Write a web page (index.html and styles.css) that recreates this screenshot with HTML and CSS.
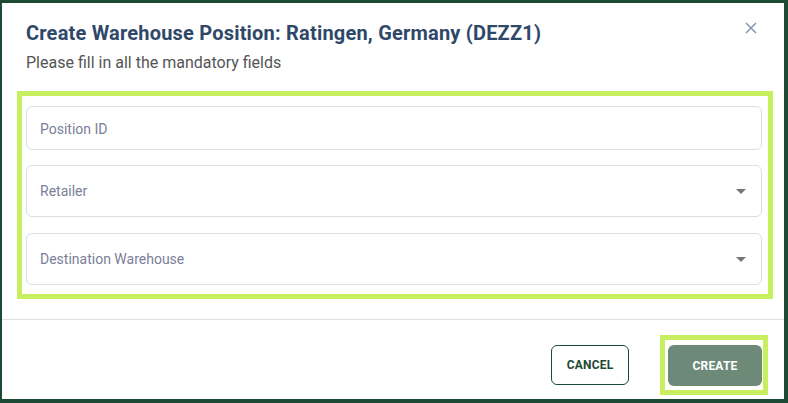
FILE: index.html
```html
<!DOCTYPE html>
<html lang="en">
<head>
<meta charset="utf-8">
<title>Create Warehouse Position</title>
<link rel="stylesheet" href="styles.css">
</head>
<body>
<div class="dialog">
  <div class="header">
    <div class="titles">
      <h1 class="title">Create Warehouse Position: Ratingen, Germany (DEZZ1)</h1>
      <p class="subtitle">Please fill in all the mandatory fields</p>
    </div>
    <button class="close" aria-label="Close">
      <svg width="12" height="12" viewBox="0 0 12 12"><path d="M1 1L11 11M11 1L1 11" stroke="#8794b0" stroke-width="1.5" fill="none"/></svg>
    </button>
  </div>
  <div class="form-area">
    <div class="field field-text"><span class="placeholder">Position ID</span></div>
    <div class="field field-select"><span class="placeholder">Retailer</span><span class="caret"></span></div>
    <div class="field field-select"><span class="placeholder">Destination Warehouse</span><span class="caret"></span></div>
  </div>
  <div class="footer">
    <button class="btn btn-cancel">CANCEL</button>
    <span class="highlight"><button class="btn btn-create">CREATE</button></span>
  </div>
</div>
</body>
</html>
```

FILE: styles.css
```css
* { box-sizing: border-box; }
html, body { margin: 0; height: 403px; }
body {
  background: #1d4a32;
  padding: 3px 4px 4px 2px;
  font-family: Roboto, "Liberation Sans", sans-serif;
}
.dialog {
  background: #fff;
  height: 396px;
  display: flex;
  flex-direction: column;
}
.header {
  display: flex;
  justify-content: space-between;
  align-items: flex-start;
  padding: 18px 27px 0 24px;
}
.title {
  margin: 0;
  font-size: 20px;
  line-height: 24px;
  font-weight: 700;
  letter-spacing: 0.2px;
  color: #2f4869;
}
.subtitle {
  margin: 8px 0 0;
  font-size: 16px;
  line-height: 20px;
  font-weight: 400;
  color: #555555;
}
.close {
  border: 0;
  background: none;
  padding: 0;
  margin-top: 1px;
  width: 12px;
  height: 12px;
  display: flex;
}
.form-area {
  margin: 18px 11px 0 15px;
  border: 5px solid #c8ef5f;
  padding: 10px 6px 9px 4px;
  display: flex;
  flex-direction: column;
  gap: 15px;
}
.field {
  border: 1px solid #dcdde2;
  border-radius: 6px;
  display: flex;
  align-items: center;
  justify-content: space-between;
  padding: 0 15px 0 13px;
}
.field-text { height: 44px; padding-top: 1px; }
.field-select { height: 52px; }
.field-select + .field-select { margin-top: 1px; }
.placeholder {
  font-size: 14px;
  color: #7a8098;
}
.caret {
  width: 0;
  height: 0;
  border-left: 5px solid transparent;
  border-right: 5px solid transparent;
  border-top: 5px solid #767676;
  margin-top: 1px;
}
.footer {
  margin-top: 20px;
  border-top: 1px solid #dde0e6;
  display: flex;
  justify-content: flex-end;
  align-items: flex-start;
  padding: 15px 16px 0 0;
}
.btn {
  font-family: Roboto, "Liberation Sans", sans-serif;
  font-size: 12px;
  font-weight: 700;
  letter-spacing: 0.2px;
  height: 40px;
  border-radius: 6px;
  cursor: pointer;
}
.btn-cancel {
  margin-top: 10px;
  width: 78px;
  background: #fff;
  border: 1px solid #1d4a32;
  color: #1d4a32;
  margin-right: 31px;
}
.highlight {
  display: flex;
  border: 5px solid #c8ef5f;
  padding: 5px 1px 4px 3px;
}
.btn-create {
  width: 94px;
  height: 41px;
  border: 0;
  background: #6d8a78;
  color: #fff;
}
```
